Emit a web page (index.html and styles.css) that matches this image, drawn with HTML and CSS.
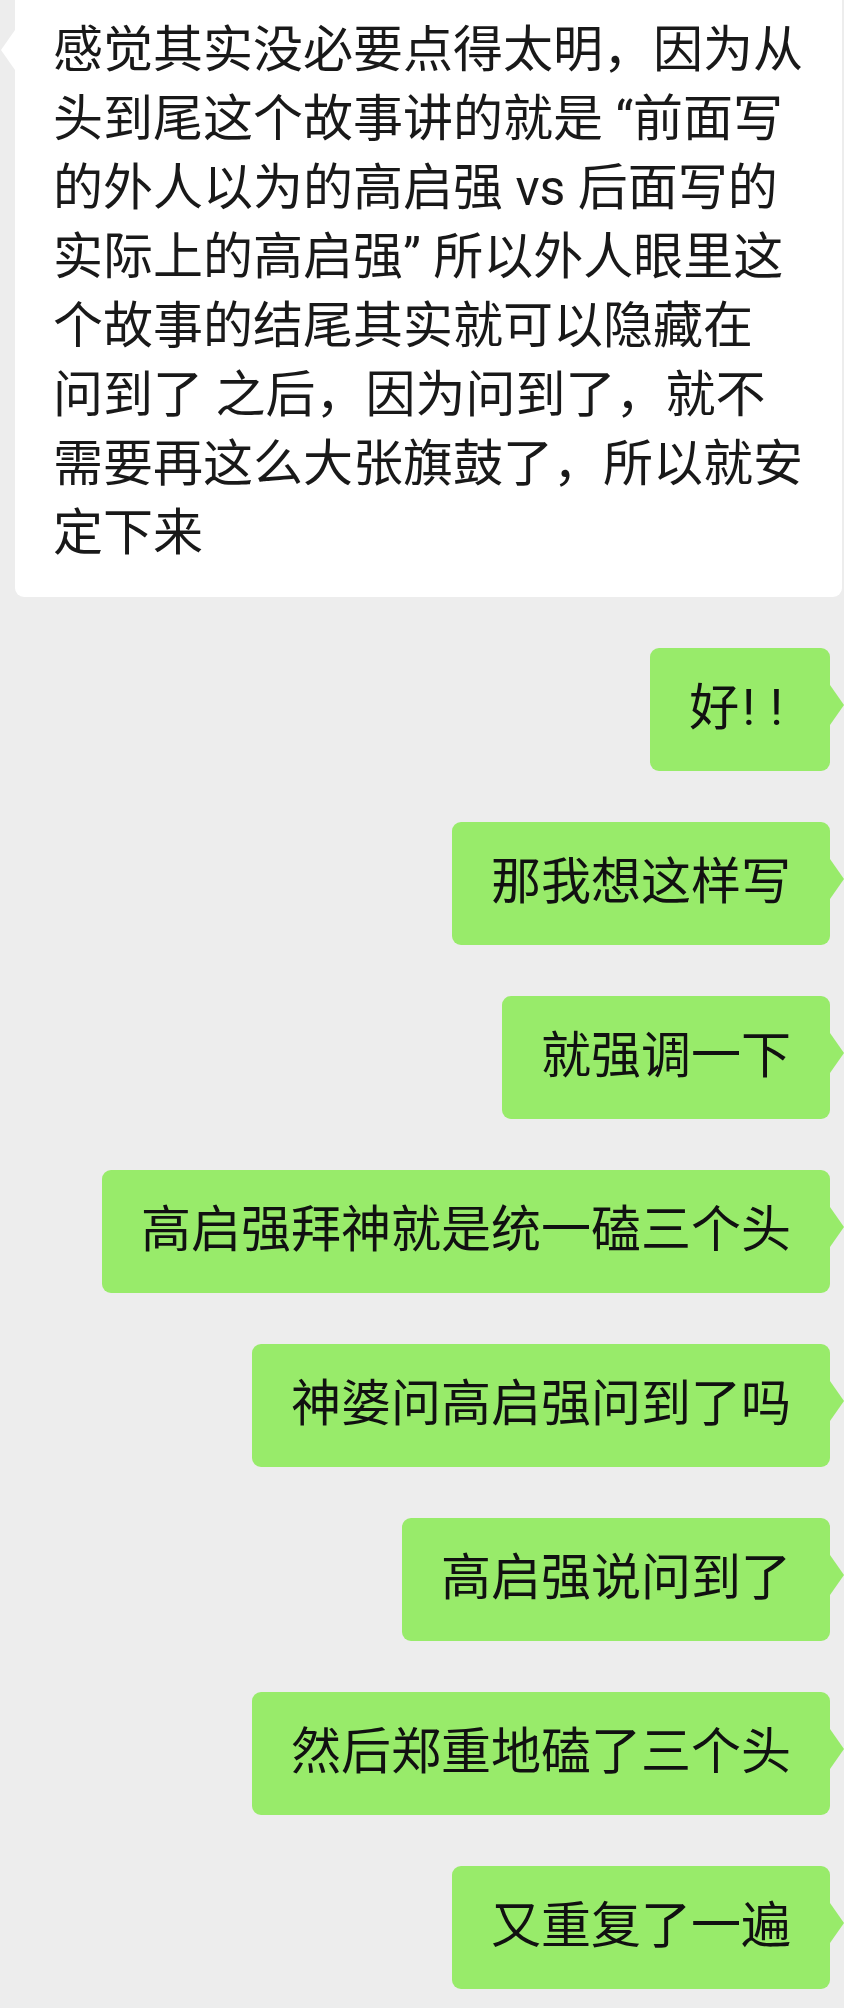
FILE: index.html
```html
<!DOCTYPE html>
<html lang="zh-CN">
<head>
  <meta charset="UTF-8">
  <title>聊天记录</title>
  <meta name="viewport" content="width=device-width, initial-scale=1">
  <link rel="stylesheet" href="styles.css">
</head>
<body>
  <div class="chat">
    <div class="msg in">
      <div class="bubble">感觉其实没必要点得太明，因为从头到尾这个故事讲的就是 “前面写的外人以为的高启强 vs 后面写的实际上的高启强” 所以外人眼里这个故事的结尾其实就可以隐藏在 问到了 之后，因为问到了，就不需要再这么大张旗鼓了，所以就安定下来</div>
    </div>
    <div class="msg out">
      <div class="bubble">好<span class="bang">!!</span></div>
    </div>
    <div class="msg out">
      <div class="bubble">那我想这样写</div>
    </div>
    <div class="msg out">
      <div class="bubble">就强调一下</div>
    </div>
    <div class="msg out">
      <div class="bubble">高启强拜神就是统一磕三个头</div>
    </div>
    <div class="msg out">
      <div class="bubble">神婆问高启强问到了吗</div>
    </div>
    <div class="msg out">
      <div class="bubble">高启强说问到了</div>
    </div>
    <div class="msg out">
      <div class="bubble">然后郑重地磕了三个头</div>
    </div>
    <div class="msg out">
      <div class="bubble">又重复了一遍</div>
    </div>
  </div>
</body>
</html>
```

FILE: styles.css
```css
body {
  background: #ededed;
  font-family: Roboto, "Noto Sans CJK SC", sans-serif;
  margin: 0;
  padding: 0;
  overflow: hidden;
}
.chat {
  display: flex;
  flex-direction: column;
  gap: 51px;
  padding-bottom: 19px;
}
.msg {
  display: flex;
}
.msg.in {
  justify-content: flex-start;
  padding: 0 2px 0 15px;
}
.msg.out {
  justify-content: flex-end;
  padding-right: 14px;
}
.bubble {
  position: relative;
  border-radius: 9px;
  padding: 26px 39px 28px 39px;
  font-size: 50px;
  line-height: 69px;
  color: #111;
}
.bubble::before {
  content: "";
  position: absolute;
  top: 37px;
  width: 14px;
  height: 40px;
}
.in .bubble {
  background: #fff;
  color: #191919;
  margin-top: -10px;
  padding: 26px 36px 29px 38px;
}
.in .bubble::before {
  left: -14px;
  top: 40px;
  background: #fff;
  clip-path: polygon(100% 0, 0 50%, 100% 100%);
}
.out .bubble {
  background: #98eb6a;
}
.out .bubble::before {
  right: -14px;
  background: #98eb6a;
  clip-path: polygon(0 0, 100% 50%, 0 100%);
}
.bang {
  margin-left: 3px;
  margin-right: -7px;
  letter-spacing: 15px;
}
```
